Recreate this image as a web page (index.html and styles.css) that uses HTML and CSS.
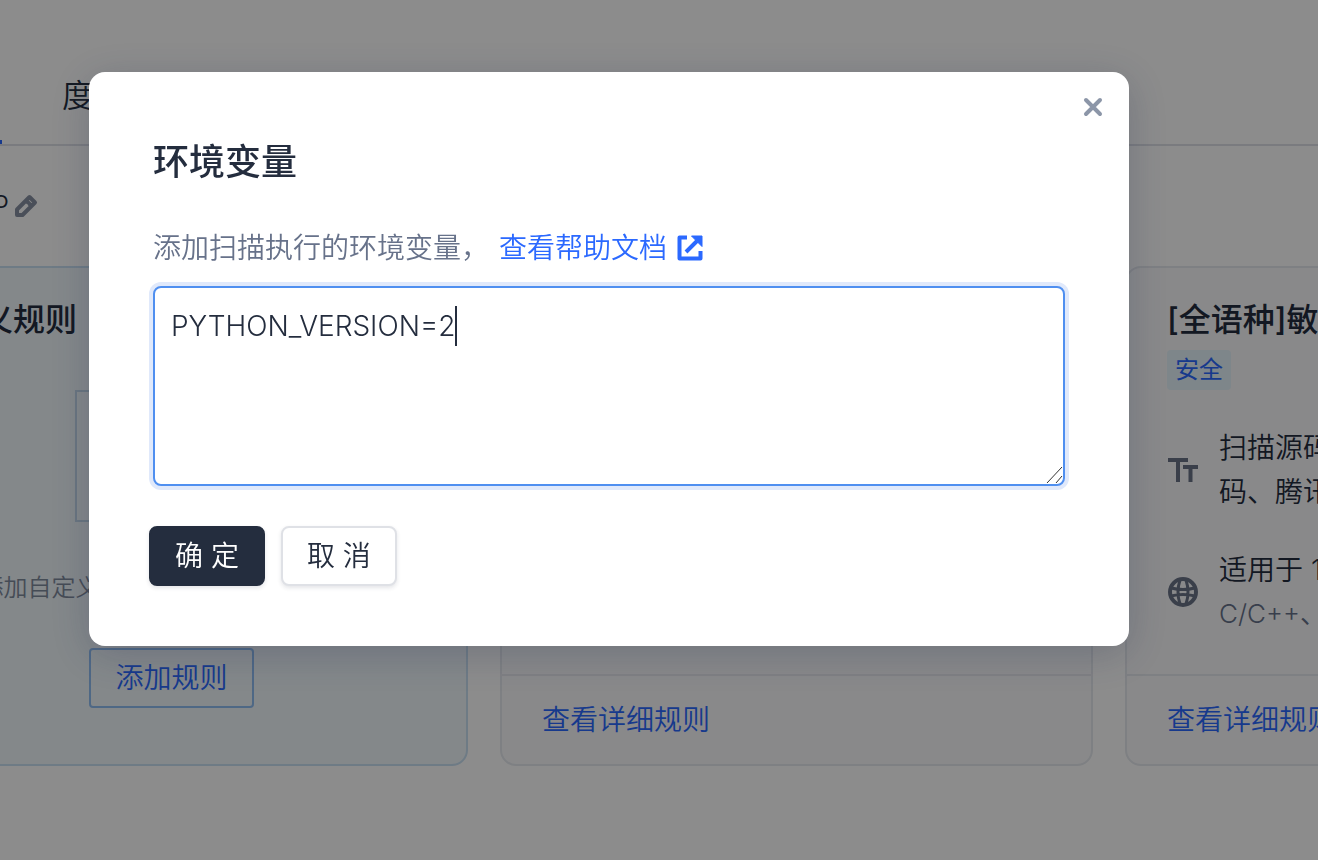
FILE: index.html
```
<!DOCTYPE html>
<html lang="zh-CN">
<head>
	<meta charset="UTF-8">
	<title>环境变量</title>
	<link rel="stylesheet" href="styles.css">
</head>
<body>

	<div class="page">

		<div class="tabs">
			<a class="tab active" href="#"></a>
			<a class="tab" href="#">度量</a>
		</div>

		<div class="plan">
			<span class="plan_name">P</span>
			<svg class="plan_edit" viewBox="0 0 24 24">
				<path d="M3 15.500V21h5.500L21 8.500 15.500 3z M12 6.500l5.500 5.500" />
				<path class="thin" d="M8.500 15.500l5-5" />
			</svg>
		</div>

		<div class="cards">

			<div class="card custom">
				<div class="card_body">
					<h3>自定义规则</h3>
					<svg class="custom_pic" viewBox="0 0 194 146">
						<path d="M1 1h192v130H1z M15 131v14h164v-14" />
					</svg>
					<p class="custom_desc">添加自定义规则</p>
					<button type="button" class="add_rule">添加规则</button>
				</div>
			</div>

			<div class="card">
				<div class="card_body"></div>
				<div class="card_foot"><a href="#">查看详细规则</a></div>
			</div>

			<div class="card">
				<div class="card_body">
					<h3>[全语种]敏感</h3>
					<span class="tag">安全</span>
					<div class="info">
						<svg class="info_icon" viewBox="0 0 32 32">
							<path class="fill" d="M1 4h20v4h-8v20H9V8H1z M16 11h15v4h-5.500v13h-4V15H16z" />
						</svg>
						<p>扫描源码<br>码、腾讯</p>
					</div>
					<div class="info">
						<svg class="info_icon" viewBox="0 0 32 32">
							<circle cx="16" cy="16" r="13" />
							<path class="thin" d="M13 4q-4 12 0 24 M19 4q4 12 0 24 M4 12q12 3 24 0 M4 20q12-3 24 0" />
						</svg>
						<p>适用于 1<small>C/C++、</small></p>
					</div>
				</div>
				<div class="card_foot"><a href="#">查看详细规则</a></div>
			</div>

		</div>
	</div>

	<div class="mask">
		<div class="modal" role="dialog" aria-labelledby="modal_title">
			<button type="button" class="close" aria-label="关闭">
				<svg viewBox="0 0 20 20"><path d="M3 3l14 14M17 3L3 17" /></svg>
			</button>

			<div class="modal_body">
				<h2 id="modal_title">环境变量</h2>
				<div class="desc">
					<label for="envs">添加扫描执行的环境变量，</label>
					<a href="#">查看帮助文档
						<svg viewBox="0 0 26 26">
							<path d="M10 2.500H2.500v21h21V16 M9 17L20 6" />
							<path class="arrow" d="M14.500 1H25v10.500z" />
						</svg>
					</a>
				</div>
				<div class="env_box">
					<textarea id="envs" spellcheck="false">PYTHON_VERSION=2</textarea>
					<span class="caret"></span>
					<svg class="grip" viewBox="0 0 18 18"><path d="M1 17L16 1M10 17l6-7" /></svg>
				</div>
			</div>

			<div class="btns">
				<button type="button" class="btn primary">确 定</button>
				<button type="button" class="btn">取 消</button>
			</div>
		</div>
	</div>

</body>
</html>
```
FILE: styles.css
```
*{
	box-sizing: border-box;
}

body{
	margin: 0;
	min-height: 100vh;
	overflow: hidden;
	background: #fff;
	color: #242d3e;
	font-family: "Inter", "Noto Sans CJK SC", sans-serif;
	font-size: 28px;
	font-weight: 350;
	line-height: 44px;
}

h2, h3, p{
	margin: 0;
	font-weight: 500;
}

p{
	font-weight: 350;
}

a{
	color: #2b69ff;
	text-decoration: none;
}

button, textarea{
	font: inherit;
}

svg{
	fill: none;
	flex: none;
}

/* page under the dialog, wider than the window on both sides */
.page{
	margin: 0 -400px 0 -125px;
	white-space: nowrap;
}

.tabs{
	display: flex;
	gap: 60px;
	height: 146px;
	padding-top: 72px;
	border-bottom: 2px solid #dfe1e8;
}

.tab{
	color: #242d3e;
	font-size: 32px;
	line-height: 48px;
}

.tab.active{
	width: 127px;
	border-bottom: 4px solid #2b69ff;
}

.plan{
	display: flex;
	align-items: center;
	gap: 5px;
	height: 120px;
}

.plan_name{
	width: 134px;
	text-align: right;
}

.plan_edit{
	width: 24px;
	height: 24px;
	stroke: #8790a2;
	stroke-width: 4;
	stroke-linejoin: round;
}

.plan_edit .thin{
	stroke: #fff;
	stroke-width: 2;
}

.cards{
	display: grid;
	grid-template-columns: repeat(3, 1fr);
	gap: 32px;
}

.card{
	display: flex;
	flex-direction: column;
	min-height: 500px;
	border: 2px solid #e6e9ee;
	border-radius: 16px;
	background: #f9fafc;
}

.card_body{
	flex: 1;
	padding: 30px 40px 38px;
}

.card h3{
	font-size: 32px;
}

.card_foot{
	height: 90px;
	padding: 22px 40px;
	border-top: 2px solid #e6e9ee;
}

.custom{
	border-color: #c9e0f3;
	background: #f0f7fc;
}

.custom .card_body{
	display: flex;
	flex-direction: column;
	align-items: center;
}

.custom h3{
	align-self: flex-start;
}

.custom_pic{
	width: 194px;
	height: 146px;
	margin: 48px 0 30px;
	stroke: #c0d6e9;
	stroke-width: 2;
}

.custom_desc{
	width: 384px;
	color: #7f8a9c;
	font-size: 24px;
}

.add_rule{
	height: 60px;
	margin-top: 38px;
	padding: 0 24px;
	border: 2px solid #8fbdf3;
	border-radius: 4px;
	background: none;
	color: #2b69ff;
}

.tag{
	display: block;
	width: max-content;
	margin: 8px 0 36px;
	padding: 0 8px;
	border-radius: 4px;
	background: #e6f4fb;
	color: #2b69ff;
	font-size: 24px;
	font-weight: 400;
	line-height: 40px;
}

.info{
	display: flex;
	align-items: center;
	gap: 20px;
}

.info + .info{
	margin-top: 34px;
}

.info_icon{
	width: 32px;
	height: 32px;
	stroke: #6b7488;
	stroke-width: 4;
}

.info_icon .fill{
	fill: #6b7488;
	stroke: none;
}

.info_icon .thin{
	stroke-width: 3;
}

.info small{
	display: block;
	color: #67728a;
	font-size: 26px;
}

/* dialog */
.mask{
	position: fixed;
	inset: 0;
	display: flex;
	align-items: flex-start;
	justify-content: center;
	padding: 72px 100px 0 0;
	background: rgba(0,0,0,0.45);
}

.modal{
	position: relative;
	width: 1040px;
	padding: 64px 60px 60px;
	border-radius: 16px;
	background: #fff;
	box-shadow: 0 8px 40px rgba(30,45,75,0.25);
}

.close{
	position: absolute;
	top: 25px;
	right: 26px;
	display: flex;
	padding: 0;
	border: 0;
	background: none;
}

.close svg{
	width: 20px;
	height: 20px;
	stroke: #8c96a8;
	stroke-width: 4;
	stroke-linecap: round;
}

.modal_body{
	padding: 0 4px;
}

.modal h2{
	font-size: 36px;
	line-height: 52px;
}

.desc{
	display: flex;
	gap: 10px;
	margin: 38px 0 16px;
	color: #67728a;
}

.desc a{
	display: flex;
	align-items: center;
	gap: 10px;
}

.desc svg{
	width: 26px;
	height: 26px;
	stroke: #2b69ff;
	stroke-width: 4;
	stroke-linejoin: round;
}

.desc .arrow{
	fill: #2b69ff;
	stroke-width: 1;
}

.env_box{
	position: relative;
}

.env_box textarea{
	display: block;
	width: 100%;
	height: 200px;
	padding: 16px;
	border: 2px solid #4f8ff0;
	border-radius: 8px;
	outline: none;
	box-shadow: 0 0 0 4px #e0e9fb;
	color: #242d3e;
	resize: none;
}

.caret{
	position: absolute;
	top: 20px;
	left: 302px;
	width: 2px;
	height: 40px;
	background: #242d3e;
}

.grip{
	position: absolute;
	right: 1px;
	bottom: 2px;
	width: 18px;
	height: 18px;
	stroke: #333;
	stroke-width: 1;
}

.btns{
	display: flex;
	gap: 16px;
	margin-top: 40px;
}

.btn{
	height: 60px;
	padding: 0 24px;
	border: 2px solid #dfe1e6;
	border-radius: 8px;
	background: #fff;
	box-shadow: 0 2px 4px rgba(36,45,62,0.12);
	color: #242d3e;
}

.btn.primary{
	border-color: #242d3e;
	background: #242d3e;
	color: #fff;
}
```
